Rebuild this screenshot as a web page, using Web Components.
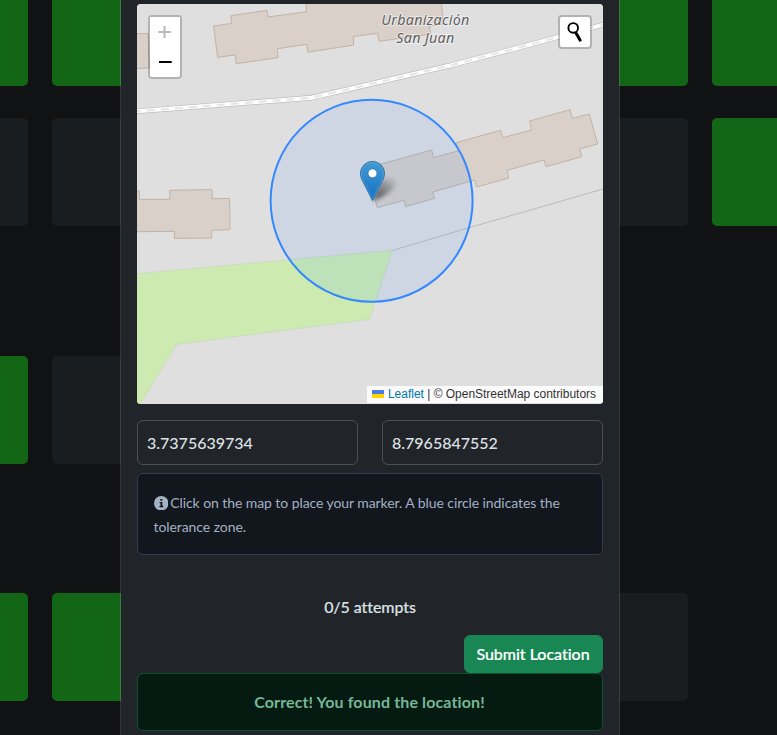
<!DOCTYPE html>
<html lang="en">
<head>
<meta charset="utf-8">
<title>Find the location</title>
<style>
html,body{margin:0;height:100%;overflow:hidden;background:#111213;color:#dee2e6;font:16px/24px Lato,"Liberation Sans",sans-serif;font-variant-ligatures:none}
</style>
</head>
<body>
<game-page></game-page>
<script>
const define = (name, html) => {
  const t = document.createElement('template');
  t.innerHTML = html;
  customElements.define(name, class extends HTMLElement {
    constructor() {
      super();
      this.attachShadow({ mode: 'open' }).append(t.content.cloneNode(true));
    }
  });
};

define('board-cell', `<style>
:host{display:block;width:108px;height:108px;border-radius:5px;background:#1a1d20}
:host([state=done]){background:#146617}
:host([state=none]){visibility:hidden}
</style>`);

customElements.define('game-board', class extends HTMLElement {
  connectedCallback() {
    const rows = ['dd...dd', 'oo...od', 'do...nn', 'dd...on'];
    const kind = { d: 'done', o: 'open', n: 'none', '.': 'none' };
    this.attachShadow({ mode: 'open' }).innerHTML = `<style>
:host{display:grid;grid-template-columns:repeat(7,108px);grid-template-rows:108px 108px 108px 108px;column-gap:24px;margin:-22px 0 0 -80px;width:900px}
.r1{margin-top:32px}.r2{margin-top:162px}.r3{margin-top:291px}
</style>` + rows.map((r, i) => [...r].map(c => `<board-cell class="r${i}" state="${kind[c]}"></board-cell>`).join('')).join('');
  }
});

define('location-pin', `<style>:host{display:block;width:41px;height:41px}svg{display:block;overflow:visible}</style>
<svg width="41" height="41" viewBox="0 0 41 41">
<defs><linearGradient id="a" x1="0" y1="0" x2="0" y2="1"><stop offset="0" stop-color="#429bd3"/><stop offset="1" stop-color="#126fc6"/></linearGradient>
<linearGradient id="b" x1="0" y1="0" x2="0" y2="1"><stop offset="0" stop-color="#2e6c97"/><stop offset="1" stop-color="#3883b7"/></linearGradient>
<linearGradient id="s" x1="0" y1="1" x2="1" y2="0"><stop offset="0" stop-opacity=".7"/><stop offset=".45" stop-opacity=".36"/><stop offset="1" stop-opacity="0"/></linearGradient>
<filter id="f" x="-30%" y="-30%" width="160%" height="160%"><feGaussianBlur stdDeviation="1.900"/></filter></defs>
<path d="M12.5 40 L20 21 Q30 14 36 19 Q37 28 24 35 Z" fill="url(#s)" filter="url(#f)"/>
<path d="M12.5.5C5.8.5.5 6 .5 12.5c0 2.4.8 5 2 7.3L12.5 39.700l10-19.900c1.200-2.300 2-4.900 2-7.300C24.500 6 19.200.5 12.500.5Z" fill="url(#a)" stroke="url(#b)"/>
<path d="M12.500 1.600C6.400 1.600 1.600 6.500 1.600 12.500c0 2.200.8 4.700 1.900 6.800L12.500 37.300l9-18c1.100-2.100 1.900-4.600 1.900-6.800C23.400 6.500 18.600 1.600 12.500 1.600Z" fill="none" stroke="#fff" stroke-opacity=".13"/>
<circle cx="12.500" cy="12.300" r="4.400" fill="#fff" stroke="#2e6c97" stroke-opacity=".6"/>
</svg>`);

define('zoom-control', `<style>
:host{display:block;width:30px;border:2px solid rgba(0,0,0,.2);border-radius:4px;background-clip:padding-box}
div{height:30px;display:grid;place-items:center;background:#fff;border-radius:0 0 2px 2px}
div:first-child{background:#f4f4f4;border-bottom:1px solid #ccc;border-radius:2px 2px 0 0}
svg{display:block}
</style><div><svg width="30" height="30"><path d="M8.300 15h12.700M14.500 9v12" stroke="#bbb" stroke-width="2.200"/></svg></div>
<div><svg width="30" height="30"><path d="M9 15h12.700" stroke="#000" stroke-width="2"/></svg></div>`);

define('search-control', `<style>
:host{display:block;width:30px;height:30px;border:2px solid rgba(0,0,0,.2);border-radius:4px;background:#fff;background-clip:padding-box}
svg{display:block}</style>
<svg width="30" height="30" viewBox="0 0 30 30"><circle cx="13.200" cy="10.900" r="4.800" fill="none" stroke="#000" stroke-width="1.900"/><path d="M15.700 15.500 20.700 24.300" stroke="#000" stroke-width="3"/></svg>`);

define('map-attribution', `<style>
:host{display:block;background:rgba(255,255,255,.88);padding:0 7px 0 5px;font:12px/17px "Liberation Sans",Arial,sans-serif;color:#333;white-space:nowrap}
a{color:#0078a8}svg{display:inline-block;width:12px;height:8px;margin-right:4px}
span{letter-spacing:-.02px}
</style><a><svg viewBox="0 0 12 8"><path fill="#4c7be1" d="M0 0h12v4H0z"/><path fill="#ffd500" d="M0 4h12v4H0z"/></svg>Leaflet</a><span> | © OpenStreetMap contributors</span>`);

define('location-map', `<style>
:host{display:block;position:relative;height:400px;border-radius:4px;overflow:hidden;background:#ddd}
svg{display:block}
location-pin{position:absolute;left:223px;top:157px}
zoom-control{position:absolute;left:11px;top:11px}
search-control{position:absolute;right:11px;top:11px}
map-attribution{position:absolute;right:0;bottom:1px}
text{font:italic 14.300px "Noto Sans",sans-serif;fill:#606060;stroke:#fff;stroke-opacity:.5;stroke-width:2;paint-order:stroke;text-anchor:middle}
</style>
<svg width="466" height="400" viewBox="137 4 466 400">
<path fill="#dfdfdf" d="M137 4h466v400H137z"/>
<path fill="#cdebb0" stroke="#c5d5b8" stroke-width=".6" d="M137 273.700 286.700 260 392.500 250.300 369.300 319.300 176.700 344.300 139.500 405H136z"/>
<path d="M392 250.500 469.300 227.700 603 189" fill="none" stroke="#bbb"/>
<g fill="#d9d0c9" stroke="#c2b2a5">
<path d="M213.500 26 231.700 23.400 230.700 15.700 267 10.300 268 17 306.700 11.700 305.700 3H441.500L443.300 24 429.500 26 430.600 34 379 41.300 377.700 33.300 353.300 36.500 353.700 45 307.700 52.300 306.700 44.300 277.300 48.700 278 57.700 236.300 63.700 235.300 55 217.700 57.300z"/>
<path d="M136 33.800 148 33.400 149.500 68 136 68.500z"/>
<path d="M136 191h3.300v8.300h30.500v-9l42.200-.7.300 9.100 17.400-.3.300 31.300-18.300.6v7.700l-37.300.4v-7l-38.400.3z"/>
<path d="M367 168 431.700 150 433.300 157.700 458.700 150.700 456 142.700 500.700 130.300 502.700 137.700 531.700 130 529.700 121 570 109.700 572.300 118.300 589.300 114 597.700 144 579.700 149 581.700 156.700 546 166.700 544 160 507 170.300 508.700 178 476.700 187 474.700 180 432.700 192 434.300 198.300 405.700 206.700 404 200.300 377.300 207.700z"/>
</g>
<g fill="none" stroke-linejoin="round">
<path stroke="#bdbdbd" stroke-width="5.400" d="M135 111.500 311.700 97.700 360 86.500 450 65.500 510 50 604 24.500"/>
<path stroke="#fff" stroke-width="4" d="M135 111.500 311.700 97.700 360 86.500 450 65.500 510 50 604 24.500"/>
<path stroke="#e6e6e6" stroke-width="2.200" stroke-dasharray="8 6" stroke-dashoffset="2" d="M135 111.500 311.700 97.700 360 86.500 450 65.500 510 50 604 24.500"/>
</g>
<text x="425.300" y="24.500" textLength="88">Urbanización</text><text x="425.300" y="42.500" textLength="58">San Juan</text>
<circle cx="371.600" cy="200.800" r="101" fill="#38f" fill-opacity=".1" stroke="#38f" stroke-width="2"/>
</svg>
<location-pin></location-pin><zoom-control></zoom-control><search-control></search-control><map-attribution></map-attribution>`);

define('coord-field', `<style>
:host{display:block;flex:1;box-sizing:border-box;height:45px;border:1px solid #495057;border-radius:6px;padding:10px 9px;line-height:24px;color:#dee2e6;font-weight:500}
</style><slot></slot>`);

define('info-note', `<style>
:host{display:block;box-sizing:border-box;height:82px;margin-top:8px;border:1px solid #303e50;border-radius:6px;background:#12161d;color:#a3b1c2;padding:17px 15px 17px 15.500px;font-size:14px;line-height:24px;letter-spacing:-.075px}
svg{display:inline-block;width:14.500px;height:14.500px;vertical-align:-2px;margin-right:2.200px}
</style><svg viewBox="0 0 16 16"><circle cx="8" cy="8" r="8" fill="#a3b1c2"/><path fill="#12161d" d="M7 3.300h2.200v2H7zM6.200 6.500h3v4.300h1v1.500H6.100v-1.500h1.100V8h-1z"/></svg><slot></slot>`);

define('attempt-count', `<style>:host{display:block;text-align:center;margin-top:40px;line-height:24px;font-weight:500;letter-spacing:-.08px;-webkit-text-stroke:.15px}</style><slot></slot>`);

define('submit-button', `<style>
:host{display:block;align-self:flex-end;margin-top:16px}
button{display:block;margin:0;font:500 16px/24px Lato,sans-serif;font-variant-ligatures:none;letter-spacing:-.02px;-webkit-text-stroke:.2px;color:#fff;background:#198754;border:1px solid #198754;border-radius:6px;padding:6px 1px 6px 0;width:139px;height:38px;white-space:nowrap}
</style><button><slot></slot></button>`);

define('result-alert', `<style>
:host{display:block;box-sizing:border-box;height:58px;border:1px solid #0f5132;border-radius:6px;background:#051b11;color:#75b798;padding:16px 17px 16px 16px;text-align:center;font-weight:700;line-height:24px;letter-spacing:.12px}
</style><slot></slot>`);

define('location-dialog', `<style>
:host{box-sizing:border-box;width:500px;height:735px;padding:4px 16px;background:#212529;background-clip:padding-box;border:solid rgba(255,255,255,.15);border-width:0 1px;display:flex;flex-direction:column;overflow:hidden}
.coords{display:flex;gap:24px;margin-top:16px}
</style><location-map></location-map>
<div class="coords"><coord-field>3.7375639734</coord-field><coord-field>8.7965847552</coord-field></div>
<info-note>Click on the map to place your marker. A blue circle indicates the tolerance zone.</info-note>
<attempt-count>0/5 attempts</attempt-count>
<submit-button>Submit Location</submit-button>
<result-alert>Correct! You found the location!</result-alert>`);

define('game-page', `<style>
:host{display:grid;width:777px;height:735px;overflow:hidden}
game-board,location-dialog{grid-area:1/1}
game-board{align-self:start}
location-dialog{margin-left:120px;z-index:1}
</style><game-board></game-board><location-dialog></location-dialog>`);
</script>
</body>
</html>
